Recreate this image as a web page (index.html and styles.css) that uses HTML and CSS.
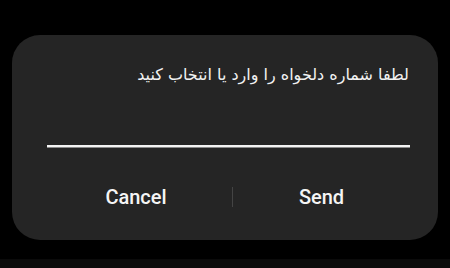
FILE: index.html
```html
<!DOCTYPE html>
<html lang="fa">
<head>
<meta charset="utf-8">
<link rel="stylesheet" href="styles.css">
</head>
<body>
<div class="screen">
  <div class="dialog">
    <div class="title" dir="rtl">لطفا شماره دلخواه را وارد یا انتخاب کنید</div>
    <div class="field"></div>
    <div class="actions">
      <div class="btn btn-cancel">Cancel</div>
      <div class="divider"></div>
      <div class="btn btn-send">Send</div>
    </div>
  </div>
  <div class="navbar"></div>
</div>
</body>
</html>
```
FILE: styles.css
```css
html, body {
  margin: 0;
  padding: 0;
  background: #000;
}
.screen {
  width: 450px;
  height: 268px;
  display: flex;
  flex-direction: column;
  overflow: hidden;
}
.dialog {
  margin: 35px 12px 0 12px;
  height: 205px;
  background: #252525;
  border-radius: 28px;
  box-sizing: border-box;
  padding: 0 28px 0 35px;
  display: flex;
  flex-direction: column;
}
.title {
  margin-top: 28px;
  color: #f2f2f2;
  font-family: "DejaVu Sans", "Noto Sans", sans-serif;
  font-size: 16px;
  line-height: 24px;
  text-align: right;
  padding-right: 1px;
}
.field {
  margin-top: 58px;
  height: 2px;
  background: #f4f4f4;
  border-bottom: 1px solid #8a8a8a;
}
.actions {
  margin: 37px 0 0 -7px;
  display: flex;
  align-items: center;
  height: 24px;
}
.btn {
  color: #f5f5f5;
  font-family: Roboto, "Liberation Sans", sans-serif;
  font-weight: 500;
  font-size: 20px;
  line-height: 24px;
  text-align: center;
}
.btn-cancel {
  width: 192px;
}
.divider {
  width: 1px;
  height: 20px;
  background: #444;
}
.btn-send {
  flex: 1;
}
.navbar {
  margin-top: 19px;
  height: 9px;
  background: #0b0b0b;
}
```
